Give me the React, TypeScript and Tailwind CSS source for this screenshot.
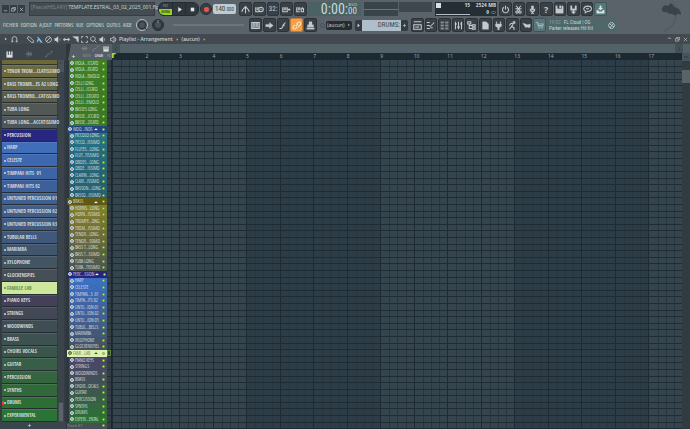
import type { ReactNode } from 'react';

type Row = { name: string; color: string; group?: boolean; selected?: boolean };

const channels: Row[] = [
  { name: 'TENOR TROM...CLATISSIMO', color: '#6a6a42' },
  { name: 'BASS TROMB...ES A2 LONG', color: '#626548' },
  { name: 'BASS TROMBO...CATISSIMO', color: '#5a5d4a' },
  { name: 'TUBA LONG', color: '#525955' },
  { name: 'TUBA LONG...ACCATISSIMO', color: '#4d565a' },
  { name: 'PERCUSSION', color: '#27277f' },
  { name: 'HARP', color: '#406eb9' },
  { name: 'CELESTE', color: '#3e69b0' },
  { name: 'TIMPANI HITS  01', color: '#3d64a4' },
  { name: 'TIMPANI HITS 02', color: '#3d609b' },
  { name: 'UNTUNED PERCUSSION 01', color: '#405f92' },
  { name: 'UNTUNED PERCUSSION 02', color: '#415d88' },
  { name: 'UNTUNED PERCUSSION 03', color: '#425a7f' },
  { name: 'TUBULAR BELLS', color: '#3f587b' },
  { name: 'MARIMBA', color: '#41556c' },
  { name: 'XYLOPHONE', color: '#435463' },
  { name: 'GLOCKENSPIEL', color: '#464f57' },
  { name: 'FAMILLE LAB', color: '#cde79d', selected: true },
  { name: 'PIANO KEYS', color: '#444059' },
  { name: 'STRINGS', color: '#434857' },
  { name: 'WOODWINDS', color: '#3f4d55' },
  { name: 'BRASS', color: '#3d5150' },
  { name: 'CHOIRS VOCALS', color: '#3a554b' },
  { name: 'GUITAR', color: '#385e47' },
  { name: 'PERCUSSION', color: '#356441' },
  { name: 'SYNTHS', color: '#31693b' },
  { name: 'DRUMS', color: '#2d6e35' },
  { name: 'EXPERIMENTAL', color: '#2b7337' },
];

const tracks: Row[] = [
  { name: 'VIOLA...ICCATO', color: '#3d7e26' },
  { name: 'VIOLA...ZICATO', color: '#3d7e26' },
  { name: 'VIOLA...EMOLO', color: '#3d7e26' },
  { name: 'CELLI LONG', color: '#3c7c26' },
  { name: 'CELLI...ICCATO', color: '#3c7c26' },
  { name: 'CELLI...ZZICATO', color: '#3b7b26' },
  { name: 'CELLI...EMOLO', color: '#3b7b26' },
  { name: 'BASSES LONG', color: '#3a7926' },
  { name: 'BASSE...ICCATO', color: '#3a7926' },
  { name: 'BASSE...ZICATO', color: '#3a7926' },
  { name: 'WOO...INDS', color: '#244583', group: true },
  { name: 'PICCOLO LONG', color: '#267388' },
  { name: 'PICCO...ISSIMO', color: '#267085' },
  { name: 'FLUTES...LONG', color: '#266d82' },
  { name: 'FLUT...TISSIMO', color: '#266a7f' },
  { name: 'OBOES...LONG', color: '#26687c' },
  { name: 'OBOE...ISSIMO', color: '#266579' },
  { name: 'CLARIN...LONG', color: '#266377' },
  { name: 'CLARI...ISSIMO', color: '#266276' },
  { name: 'BASSON...LONG', color: '#276175' },
  { name: 'BASSO...ISSIMO', color: '#276074' },
  { name: 'BRASS', color: '#5e5a16', group: true },
  { name: 'HORNS...LONG', color: '#817d2f' },
  { name: 'HORN...ISSIMO', color: '#7d7931' },
  { name: 'TROMPE...ONG', color: '#777534' },
  { name: 'TROM...ISSIMO', color: '#727138' },
  { name: 'TENOR...LONG', color: '#6c6c3c' },
  { name: 'TENOR...SSIMO', color: '#666840' },
  { name: 'BASS T...LONG', color: '#606444' },
  { name: 'BASS T...SSIMO', color: '#5a6048' },
  { name: 'TUBA LONG', color: '#535b4e' },
  { name: 'TUBA...TISSIMO', color: '#4e5852' },
  { name: 'PERC...SSION', color: '#25257c', group: true },
  { name: 'HARP', color: '#3c6fc4' },
  { name: 'CELESTE', color: '#3c6dbd' },
  { name: 'TIMPAN...S  01', color: '#3c69b3' },
  { name: 'TIMPA...ITS 02', color: '#3d66aa' },
  { name: 'UNTU...ION 01', color: '#3f63a1' },
  { name: 'UNTU...ION 02', color: '#406099' },
  { name: 'UNTU...ION 03', color: '#415f90' },
  { name: 'TUBUL...BELLS', color: '#425c86' },
  { name: 'MARIMBA', color: '#435878' },
  { name: 'XYLOPHONE', color: '#44546b' },
  { name: 'GLOCKENSPIEL', color: '#465160' },
  { name: 'FAMI...LAB', color: '#dcf0b4', group: true, selected: true },
  { name: 'PIANO KEYS', color: '#4a4666' },
  { name: 'STRINGS', color: '#484964' },
  { name: 'WOODWINDS', color: '#454c5f' },
  { name: 'BRASS', color: '#425059' },
  { name: 'CHOIR...OCALS', color: '#3f5553' },
  { name: 'GUITAR', color: '#3b5a4c' },
  { name: 'PERCUSSION', color: '#386046' },
  { name: 'SYNTHS', color: '#34663f' },
  { name: 'DRUMS', color: '#306c39' },
  { name: 'EXPERI...ENTAL', color: '#2d7235' },
];

const bars = Array.from({ length: 17 }, (_, i) => i + 1);

function Icon({ d, size = 'size-[9px]', fill = false }: { d: string; size?: string; fill?: boolean }) {
  return (
    <svg viewBox="0 0 12 12" className={`${size} shrink-0`} fill={fill ? 'currentColor' : 'none'} stroke="currentColor" strokeWidth={fill ? 0.4 : 1.4}>
      <path d={d} />
    </svg>
  );
}

function Tool({ label, tone = 'bg-[#394147] text-[#c3cbcf] border-[#2d3439]', children }: { label: string; tone?: string; children: ReactNode }) {
  return (
    <button aria-label={label} className={`flex h-[14px] min-w-0 items-center justify-center rounded-[2px] border ${tone}`}>
      {children}
    </button>
  );
}

const ICONS = {
  metronome: 'M6 11V3M3 5L6 2l3 3M1 9q2-5 4-5M11 9q-2-5-4-5',
  keysWait: 'M1 3v6h5M3 3v4M5 3v4M8 3a2.500 2.500 0 1 1 0 6a2.500 2.500 0 1 1 0-6M8 5v2',
  keysBlend: 'M1 3v6h6V3M3 3v4M5 3v4M8 6h3M9.500 4.500v3',
  keysLoop: 'M1 3v6h4M3 3v4M5 3v4M7 5h3v4H7zM8 3l2 2',
  power: 'M4 3a4 4 0 1 0 4 0M6 1v5',
  cut: 'M3 1l5 7M9 1L4 8M4 8a1.500 1.500 0 1 0 .1 0M8 8a1.500 1.500 0 1 0 .1 0M2 5h8',
  mic: 'M6 1v6M5 1v6M7 1v6M3 5q0 4 3 4t3-4M6 9v2M4 11h4',
  save: 'M1 1h2v4h6V1h1l1 1v9H1zM6 1h2v3H6z',
  saveNew: 'M2 1h2v4h4V1h2v6H2zM5 7h2v2h2L6 12L3 9h2z',
  chat: 'M6 1.500c7 0 7 7 0 7L3 10.500V8C-.5 6 1 1.500 6 1.500M4 5h4',
  download: 'M5 1h2v3h2L6 7L3 4h2zM1 7h2l1 2h4l1-2h2v4H1z',
  arrow: 'M1 4.500h5V2l5 4l-5 4V7.500H1z',
  slide: 'M2 10h2q2 0 3-5l3-3M7 5l3-3M8 7V4',
  link: 'M5 7l3-3M4 5L2 7a2 2 0 0 0 3 3l2-2M6 4l2-2a2 2 0 0 1 3 3L8 8',
  stamp: 'M4 1h4v4h2v3H2V5h2zM1 9h10v2H1z',
  playlist: 'M1 1h10M1 11h10V5H1zM3 8h3M6 9l2-2',
  piano: 'M1 2h4M1 6h4M1 10h4M5 8l6-6M6 9h3',
  rack: 'M1 1h4v2H1zM7 1h4v2H7zM1 5h4v2H1zM7 5h4v2H7zM1 9h4v2H1zM7 9h4v2H7z',
  mixer: 'M2 1v10M6 1v10M10 1v10M1 4h3M4 8h4M8 4h3',
  browser: 'M1 1h4v3H1zM3 4v6h4M3 6h4M7 5h4v2H7zM7 9h4v2H7z',
  file: 'M2 1h5l3 3v7H2z',
  plug: 'M3 1h1v3h4V1h1v3h1v3L7 9v3H5V9L2 7V4h1z',
  run: 'M7 1h2v2H7zM7 4L4 3L2 6M7 4L5 7l3 2v3M5 7l-3 4',
  plane: 'M1 3l4 1l2 1l4-1v4L9 9L7 8L5 9L3 6z',
  cart: 'M1 2h2l2 6h5l1-4H4M5 10h1M9 10h1M4 6h7',
  globe: 'M6 1a5 5 0 1 0 .1 0M3 3l3 3l3-3M4 10l2-4l4 2',
  wave: 'M1 6h10M3 4v4M5 2v8M7 4v4M9 3v6',
  curve: 'M1 10l3-4h3l4-4M2 9v2M10 1v2',
  pencil: 'M1 2l3-1l7 7v3H8L1 5z',
  brush: 'M2 1l3 2l4 5l2 3H8L5 7l-3 4V7l2-2z',
  no: 'M6 1a5 5 0 1 0 .1 0M2 10L10 2',
  mute: 'M1 4h2l4-3v10L3 8H1zM9 4l2 4M11 4L9 8',
  speaker: 'M1 4h2l4-3v10L3 8H1zM9 3q2 3 0 6',
  resize: 'M0 6l3-3v2h6V3l3 3l-3 3V7H3v2z',
  slice: 'M1 1h10v10L8 8V5L5 4z',
  select: 'M1 4V1h3M8 1h3v3M11 8v3H8M4 11H1V8',
  zoom: 'M5 1a4 4 0 1 0 .1 0M8 8l3 3',
  magnet: 'M2 11V5a4 4 0 0 1 8 0v6M1 9h3M8 9h3',
  keys: 'M1 1h2v6h2V1h2v6h2V1h2v10H1z',
};

function Knob({ big = false }: { big?: boolean }) {
  return (
    <button aria-label={big ? 'Main volume' : 'Main pitch'} className="shrink-0">
      <svg viewBox="0 0 14 14" className="size-[14px]">
        <circle cx="7" cy="7" r="5.500" fill={big ? '#414a50' : '#333c42'} stroke={big ? '#b9c2c6' : '#273036'} strokeWidth="1" />
        <circle cx="7" cy="7" r="3.500" fill="#4a5359" stroke="#2c353b" />
        <path d={big ? 'M9 9l3 3' : 'M7 2v3'} stroke={big ? '#2c353b' : '#8d989e'} />
      </svg>
    </button>
  );
}

function TopRow() {
  return (
    <div className="flex h-[14px] items-center pl-[2px]">
      <div className="flex w-[24px] gap-px">
        {[
          ['Minimise', 'M2 9h8'],
          ['Restore', 'M4 4V1h7v6H8M1 4h7v6H1z'],
          ['Close', 'M2 2l8 8M10 2L2 10'],
        ].map(([label, d]) => (
          <button key={label} aria-label={label} className="grid h-[8px] w-[7px] place-items-center bg-[#353d43] text-[#d5dbde]">
            <Icon d={d} size="size-[5px]" />
          </button>
        ))}
      </div>
      <div className="ml-[3px] flex h-[14px] w-[126px] items-start border border-[#353e43] bg-[#424c51] pl-px font-['Noto_Sans'] text-[5px] leading-[8px] whitespace-nowrap text-[#c8d0d3]">
        <span className="mr-px text-[#7d888e]">[PascalHELARY]</span>TEMPLATE.ESTRAL_03_02_2025_001.flp
      </div>
      <div className="ml-[3px] flex h-[14px] w-[41px] overflow-hidden rounded-[6px] border border-[#252c31] bg-[#30383d] text-[#e2e7e9]">
        <button aria-label="Pattern or song mode" className="grid w-[13px] grid-rows-2 text-center font-['Open_Sans_Condensed','Roboto'] text-[4px] leading-[6px] font-bold">
          <span className="text-[#657178]">PAT</span>
          <span className="bg-[#9bd328] text-[#314808]">SONG</span>
        </button>
        <button aria-label="Play" className="grid flex-1 place-items-center border-l border-[#252c31]">
          <Icon d="M4 2l6 4l-6 4z" fill size="size-[7px]" />
        </button>
        <button aria-label="Stop" className="grid flex-1 place-items-center border-l border-[#252c31]">
          <Icon d="M2 2h8v8H2z" fill size="size-[5px]" />
        </button>
      </div>
      <button aria-label="Record" className="ml-px grid size-[12px] place-items-center rounded-full border border-[#272e33] bg-[#384046]">
        <span className="size-[5px] rounded-full bg-[#ee5348]" />
      </button>
      <button className="ml-px h-[10px] w-[23px] rounded-[2px] bg-[#bccbd4] text-center font-['Roboto_Condensed','Roboto'] text-[7px] leading-[10px] text-[#37444c]">
        140<span className="text-[5px]">.000</span>
      </button>
      <div className="ml-[3px] grid w-[68px] grid-cols-5 gap-px">
        <Tool label="Metronome"><Icon d={ICONS.metronome} /></Tool>
        <Tool label="Wait for input"><Icon d={ICONS.keysWait} /></Tool>
        <Tool label="Countdown"><span className="font-['Roboto_Condensed','Roboto'] text-[7px] leading-none">32:</span></Tool>
        <Tool label="Blend recording"><Icon d={ICONS.keysBlend} /></Tool>
        <Tool label="Loop recording"><Icon d={ICONS.keysLoop} /></Tool>
      </div>
      <div className="ml-px flex h-[14px] w-[53px] items-center justify-end bg-[#4b6264] pr-[4px] font-['Roboto_Condensed','Roboto'] text-[14px] leading-[14px] text-[#c7dcda]">
        0:00:
        <span className="flex flex-col items-end">
          <span className="text-[3px] leading-[4px]">M:S:CS</span>
          <span className="text-[9px] leading-[9px]">00</span>
        </span>
      </div>
      <div className="ml-[3px] grid h-[14px] w-[68px] grid-cols-2 gap-px">
        <div className="flex items-center bg-[#38434a]"><span className="h-px w-full bg-[#66747b]" /></div>
        <div className="h-[10px] bg-[#3d474d]" />
      </div>
      <div className="ml-[3px] flex h-[14px] w-[62px] justify-between bg-[#252e34] px-px font-['Open_Sans_Condensed','Roboto'] text-[6px] leading-[7px] font-bold text-[#cdd6da]">
        <div className="flex w-[34px] flex-col justify-between pb-px">
          <div className="flex justify-between"><span className="mt-px size-[5px] bg-[#d7e0e4]" /><span>15</span></div>
          <span className="h-px bg-[#b4c0c6]" />
        </div>
        <div className="flex flex-col items-end whitespace-nowrap">
          <span>2524 MB</span>
          <span className="flex items-center gap-[2px]">0<span className="h-[3px] w-[5px] rounded-full border border-[#66747b]" /></span>
        </div>
      </div>
      <div className="ml-[2px] grid w-[108px] grid-cols-8 gap-px">
        <Tool label="Restart"><Icon d={ICONS.power} /></Tool>
        <Tool label="Cut"><Icon d={ICONS.cut} /></Tool>
        <Tool label="Record audio"><Icon d={ICONS.mic} /></Tool>
        <Tool label="Help"><span className="font-['Open_Sans'] text-[9px] leading-none font-bold">?</span></Tool>
        <Tool label="Save"><Icon d={ICONS.save} fill /></Tool>
        <Tool label="Save new version"><Icon d={ICONS.saveNew} fill /></Tool>
        <Tool label="Chat"><Icon d={ICONS.chat} /></Tool>
        <Tool label="Download" tone="bg-[#55777a] text-[#dce6e7] border-[#3f5658]"><Icon d={ICONS.download} fill /></Tool>
      </div>
    </div>
  );
}

function MenuRow() {
  return (
    <div className="flex h-[14px] items-center pl-[2px]">
      <nav className="flex h-[13px] w-[131px] shrink-0 items-center justify-between bg-[#54666a] px-px font-['Open_Sans_Condensed_Light','Roboto'] text-[6px] leading-none whitespace-nowrap text-white">
        {['FICHIER', 'EDITION', 'AJOUT', 'PATTERNS', 'VUE', 'OPTIONS', 'OUTILS', 'AIDE'].map((item) => (
          <button key={item}>{item}</button>
        ))}
      </nav>
      <div className="ml-[2px] flex gap-[2px]">
        <Knob big />
        <Knob />
      </div>
      <input type="range" aria-label="Song position" className="ml-2 h-[2px] w-[71px] appearance-none bg-[#6b767c] [&::-webkit-slider-thumb]:appearance-none" />
      <div className="ml-[5px] grid w-[68px] grid-cols-5 gap-px">
        <Tool label="Typing keyboard"><Icon d="M1 2h10v8H1zM3 2v5M5 2v5M7 2v5M9 2v5M1 8h10" /></Tool>
        <Tool label="Step mode"><Icon d={ICONS.arrow} fill /></Tool>
        <Tool label="Slide"><Icon d={ICONS.slide} /></Tool>
        <Tool label="Multilink" tone="bg-[#f2a04c] text-[#fff0d8] border-[#c07a34]"><Icon d={ICONS.link} /></Tool>
        <Tool label="Stamp"><Icon d={ICONS.stamp} fill /></Tool>
      </div>
      <span className="ml-[3px] size-[5px] rounded-full border border-[#475157]" />
      <button className="ml-px flex h-[9px] w-[26px] items-center justify-between rounded-[2px] bg-[#262d32] px-px font-['Noto_Sans'] text-[5px] leading-none text-[#c9d1d4]">
        (aucun)<Icon d="M4 3l4 3l-4 3z" size="size-[4px]" fill />
      </button>
      <div className="ml-[3px] flex h-[11px] w-[53px] text-[#cfd6d9]">
        <button aria-label="Previous pattern" className="grid w-[7px] place-items-center rounded-l-[2px] bg-[#343c41]"><Icon d="M4 2l5 4l-5 4z" size="size-[5px]" fill /></button>
        <button className="flex-1 bg-[#afbfc9] pr-px text-right font-['Roboto_Condensed','Roboto'] text-[7px] leading-[11px] text-[#3c4b54]">DRUMS:</button>
        <button aria-label="Add pattern" className="grid w-[7px] place-items-center rounded-r-[2px] bg-[#343c41]"><Icon d="M6 2v8M2 6h8" size="size-[5px]" /></button>
      </div>
      <div className="ml-[3px] grid w-[135px] grid-cols-10 gap-px">
        <Tool label="Playlist"><Icon d={ICONS.playlist} /></Tool>
        <Tool label="Piano roll"><Icon d={ICONS.piano} /></Tool>
        <Tool label="Channel rack" tone="bg-[#394147] text-[#87939a] border-[#2d3439]"><Icon d={ICONS.rack} fill /></Tool>
        <Tool label="Mixer"><Icon d={ICONS.mixer} /></Tool>
        <Tool label="Browser"><Icon d={ICONS.browser} /></Tool>
        <Tool label="Project files"><Icon d={ICONS.file} fill /></Tool>
        <Tool label="Plugins"><Icon d={ICONS.plug} fill /></Tool>
        <Tool label="Tempo tapper"><Icon d={ICONS.run} /></Tool>
        <Tool label="Touch controllers"><Icon d={ICONS.plane} fill /></Tool>
        <Tool label="Shop" tone="bg-[#55777a] text-[#9db2b4] border-[#3f5658]"><Icon d={ICONS.cart} /></Tool>
      </div>
      <button className="ml-px flex h-[14px] w-[70px] items-center justify-between rounded-[2px] bg-[#50676a] px-[2px] text-left font-['Roboto_Condensed','Roboto'] text-[5px] leading-[6px] whitespace-nowrap text-[#c9d6d7]">
        <span><span className="mr-[3px] text-[#869b9e]">19/02</span>FL Cloud | OG<br />Parker releases Hit Kit</span>
        <Icon d={ICONS.globe} size="size-[7px]" />
      </button>
    </div>
  );
}

function Toolbar() {
  return (
    <header className="flex h-[34px] shrink-0 justify-between overflow-hidden bg-[#596369]">
      <div className="flex flex-col gap-[2px] pt-[2px]">
        <TopRow />
        <MenuRow />
      </div>
      <svg viewBox="0 0 28 32" className="mr-[6px] h-[32px] w-[28px] shrink-0">
        <path d="M16 1q5 5 4 14q-1 12-12 16" fill="none" stroke="#47525a" strokeWidth=".7" />
        <path d="M6 8q2-4 6-2l3-3q2 1 3 4q7 1 7 8q-3-2-4-1q-1 2-3 1q-2-2-4-1q-2-1-3-2q-2 1-5-1z" fill="#38434b" />
      </svg>
    </header>
  );
}

function PlaylistTitle() {
  return (
    <div className="flex h-[10px] shrink-0 items-center bg-[#424a50] pr-[2px] pl-1 text-[#c9d0d3]">
      <Icon d="M3 2l5 4l-5 4z" size="size-[4px]" fill />
      <div className="ml-[3px] mr-[9px]"><Icon d={ICONS.magnet} size="size-[7px]" /></div>
      <div className="flex gap-[2px]">
        <Icon d={ICONS.pencil} size="size-[7px]" />
        <span className="text-[#7ec3ee]"><Icon d={ICONS.brush} size="size-[7px]" fill /></span>
        <Icon d={ICONS.no} size="size-[7px]" />
        <Icon d={ICONS.mute} size="size-[7px]" fill />
        <Icon d={ICONS.resize} size="size-[7px]" fill />
        <Icon d={ICONS.slice} size="size-[7px]" fill />
        <Icon d={ICONS.select} size="size-[7px]" />
        <Icon d={ICONS.zoom} size="size-[7px]" />
        <Icon d={ICONS.speaker} size="size-[7px]" fill />
      </div>
      <div className="ml-[4px]"><Icon d={ICONS.speaker} size="size-[7px]" /></div>
      <h1 className="ml-[2px] flex items-center gap-[3px] font-['Open_Sans'] text-[5px] leading-none font-semibold whitespace-nowrap">
        <span>Playlist - Arrangement</span>
        <Icon d="M3 2l5 4l-5 4z" size="size-[3px]" fill />
        <span>(aucun)</span>
        <Icon d="M3 2l5 4l-5 4z" size="size-[3px]" fill />
      </h1>
      <div className="ml-auto flex gap-[3px]">
        <button aria-label="Minimise playlist"><Icon d="M2 3h8" size="size-[5px]" /></button>
        <button aria-label="Restore playlist"><Icon d="M4 4V1h7v6H8M1 4h7v6H1z" size="size-[5px]" /></button>
        <button aria-label="Close playlist"><Icon d="M2 2l8 8M10 2L2 10" size="size-[5px]" /></button>
      </div>
    </div>
  );
}

function ChannelPicker() {
  return (
    <aside className="flex w-[66px] shrink-0 flex-col bg-[#343c43]">
      <div className="flex h-[16px] shrink-0 items-center gap-[12px] bg-[#3d454c] pt-[4px] pl-[6px] text-[#69737a]">
        <span className="text-[#dde2e4]"><Icon d={ICONS.keys} size="size-[7px]" fill /></span>
        <Icon d={ICONS.wave} size="size-[8px]" />
        <Icon d={ICONS.curve} size="size-[8px]" />
      </div>
      <div className="flex min-h-0 flex-1">
        <div className="flex w-[57px] flex-col pl-[2px]">
          <div className="h-[5px] shrink-0 border-b border-[#2c3330] bg-[#6c6838]" />
          {channels.map((row, i) => (
            <button
              key={i}
              style={{ backgroundColor: row.color }}
              className={`relative flex min-h-0 flex-1 items-center border-t border-b border-t-white/10 border-b-[#252d33] pl-[2px] font-['Open_Sans_Condensed','Roboto'] text-[5px] leading-none font-bold whitespace-pre ${row.selected ? 'text-[#6d8a48]' : 'text-[#cfd8dd]'}`}
            >
              {row.name === 'DRUMS' && <span className="absolute left-0 h-[4px] w-[2px] bg-[#e63a35]" />}
              <span className="mr-px size-[2px] shrink-0 rounded-full bg-current" />
              {row.name}
            </button>
          ))}
        </div>
        <div className="ml-px flex w-[6px] flex-col justify-between bg-[#3b444b]">
          <div className="h-[12px] bg-[#4b545b] text-[#222a30]"><Icon d="M3 8l3-3l3 3" size="size-[5px]" /></div>
          <div className="h-[20px] border border-[#40494f] bg-[#5a646a]" />
        </div>
      </div>
      <button aria-label="Add channel" className="grid h-[7px] shrink-0 place-items-center bg-[#3d454c] pr-[7px] text-[#d0d6d9]"><Icon d="M6 2v8M2 6h8" size="size-[5px]" /></button>
    </aside>
  );
}

function TrackHeader({ row }: { row: Row }) {
  return (
    <div className={`flex min-h-0 flex-1 ${row.group ? 'pl-px' : 'pl-[3px]'}`}>
      <button
        style={{ backgroundColor: row.color }}
        className={`flex min-w-0 flex-1 items-center pr-[2px] pl-px font-['Open_Sans_Condensed_Light','Roboto'] text-[5px] leading-none whitespace-pre ${row.selected ? 'text-[#3f5220]' : 'text-white'}`}
      >
        <span className={`mr-px size-[4px] shrink-0 rounded-full border ${row.selected ? 'border-[#5e733c] bg-[#8aa35e]' : 'border-[#cbd8dc] bg-[#8b989d]'}`} />
        <span>{row.name}</span>
        {row.group && <span className="ml-auto pr-1"><Icon d="M1 9l5-5l5 5z" size="size-[4px]" fill /></span>}
        <span className={`size-[3px] shrink-0 rounded-full border border-[#70a534] bg-[#c9ef55] ${row.group ? '' : 'ml-auto'}`} />
      </button>
    </div>
  );
}

function Playlist() {
  return (
    <section className="flex min-w-0 flex-1 bg-[#2e373e]">
      <div className="flex w-[46px] shrink-0 flex-col">
        <div className="flex h-[16px] shrink-0 flex-col justify-between bg-[#555f65] pb-px pl-[15px] text-[#7b868c] [clip-path:polygon(5px_0,100%_0,100%_100%,2px_100%)]">
          <div className="flex items-center gap-[4px] pt-px">
            <Icon d={ICONS.wave} size="size-[7px]" />
            <Icon d={ICONS.curve} size="size-[7px]" />
            <span className="text-[#e0e5e7]"><Icon d={ICONS.keys} size="size-[6px]" fill /></span>
          </div>
          <div className="-ml-[10px] flex items-center gap-[4px] font-['Roboto'] text-[3px] leading-none font-bold">
            <button aria-label="Add track" className="mr-[3px] text-[#e0e5e7]"><Icon d="M6 2v8M2 6h8" size="size-[5px]" /></button>
            <span>NOTE</span><span className="text-[#d7dde0]">CHAN</span><span>PAT</span>
          </div>
        </div>
        <div className="flex min-h-0 flex-1">
          <div className="flex w-[41px] flex-col">
            {tracks.map((row, i) => <TrackHeader key={i} row={row} />)}
            <div className="flex min-h-0 flex-1 pl-px">
              <div className="flex flex-1 items-center justify-between bg-[#474f55] pr-[2px] font-['Noto_Sans'] text-[4px] leading-none text-[#87929a]">
                Track 67<span className="size-[3px] rounded-full border border-[#70a534] bg-[#c9ef55]" />
              </div>
            </div>
          </div>
          <div className="flex flex-1 flex-col border-r border-[#1d272e]">
            {[...tracks, null].map((row, i) => (
              <div key={i} className="flex min-h-0 flex-1 border-b border-[#273037] bg-[#343e45]">
                {row?.selected && <span className="w-[4px] border border-[#598b35]" />}
              </div>
            ))}
          </div>
        </div>
      </div>
      <div className="flex min-w-0 flex-1 flex-col">
        <div className="flex h-[9px] shrink-0 items-center justify-between bg-[#536168] text-[#2d373e]">
          <button aria-label="Scroll left" className="grid h-full w-[8px] place-items-center bg-[#465057]"><Icon d="M8 2L4 6l4 4" size="size-[6px]" /></button>
          <button aria-label="Scroll right" className="mr-[7px] grid h-full w-[8px] place-items-center bg-[#465057]"><Icon d="M4 2l4 4l-4 4" size="size-[6px]" /></button>
        </div>
        <div className="flex min-h-0 flex-1">
          <div className="flex min-w-0 flex-1 flex-col">
            <div className="grid h-[7px] shrink-0 grid-cols-17 bg-[#1d2931] font-['Noto_Sans'] text-[5px] leading-[7px] text-[#9aa6ac]">
              {bars.map((bar) => (
                <div key={bar} className="relative">
                  {bar === 1
                    ? <span className="absolute top-0 left-0 text-[#a8d932]"><Icon d="M0 0h11L4 5v7H0z" size="size-[5px]" fill /></span>
                    : <span className="absolute left-0">{bar}</span>}
                </div>
              ))}
            </div>
            <div className="grid min-h-0 flex-1 grid-cols-1 grid-rows-1">
              <div className="col-start-1 row-start-1 grid grid-cols-17">
                {bars.map((bar) => (
                  <div key={bar} className={`grid grid-cols-4 border-l border-[#1f2b33] ${Math.floor((bar - 1) / 4) % 2 ? 'bg-[#2d3d47]' : 'bg-[#34454e]'}`}>
                    {[0, 1, 2, 3].map((beat) => <span key={beat} className={beat ? 'border-l border-[#283640]' : ''} />)}
                  </div>
                ))}
              </div>
              <div className="z-10 col-start-1 row-start-1 flex min-h-0 flex-col">
                {[...tracks, null].map((_, i) => <div key={i} className="min-h-0 flex-1 border-b border-[#202c34]" />)}
              </div>
            </div>
          </div>
          <div className="flex w-[8px] shrink-0 flex-col bg-[#323b41]">
            <button aria-label="Scroll up" className="grid h-[8px] place-items-center bg-[#49535a] text-[#262f35]"><Icon d="M2 8l4-4l4 4" size="size-[6px]" /></button>
            <div className="mt-[9px] h-[13px] bg-[#596368]" />
          </div>
        </div>
      </div>
    </section>
  );
}

export default function App() {
  return (
    <div className="flex h-screen flex-col overflow-hidden bg-[#3a434a]">
      <Toolbar />
      <PlaylistTitle />
      <main className="flex min-h-0 flex-1">
        <ChannelPicker />
        <Playlist />
      </main>
    </div>
  );
}
